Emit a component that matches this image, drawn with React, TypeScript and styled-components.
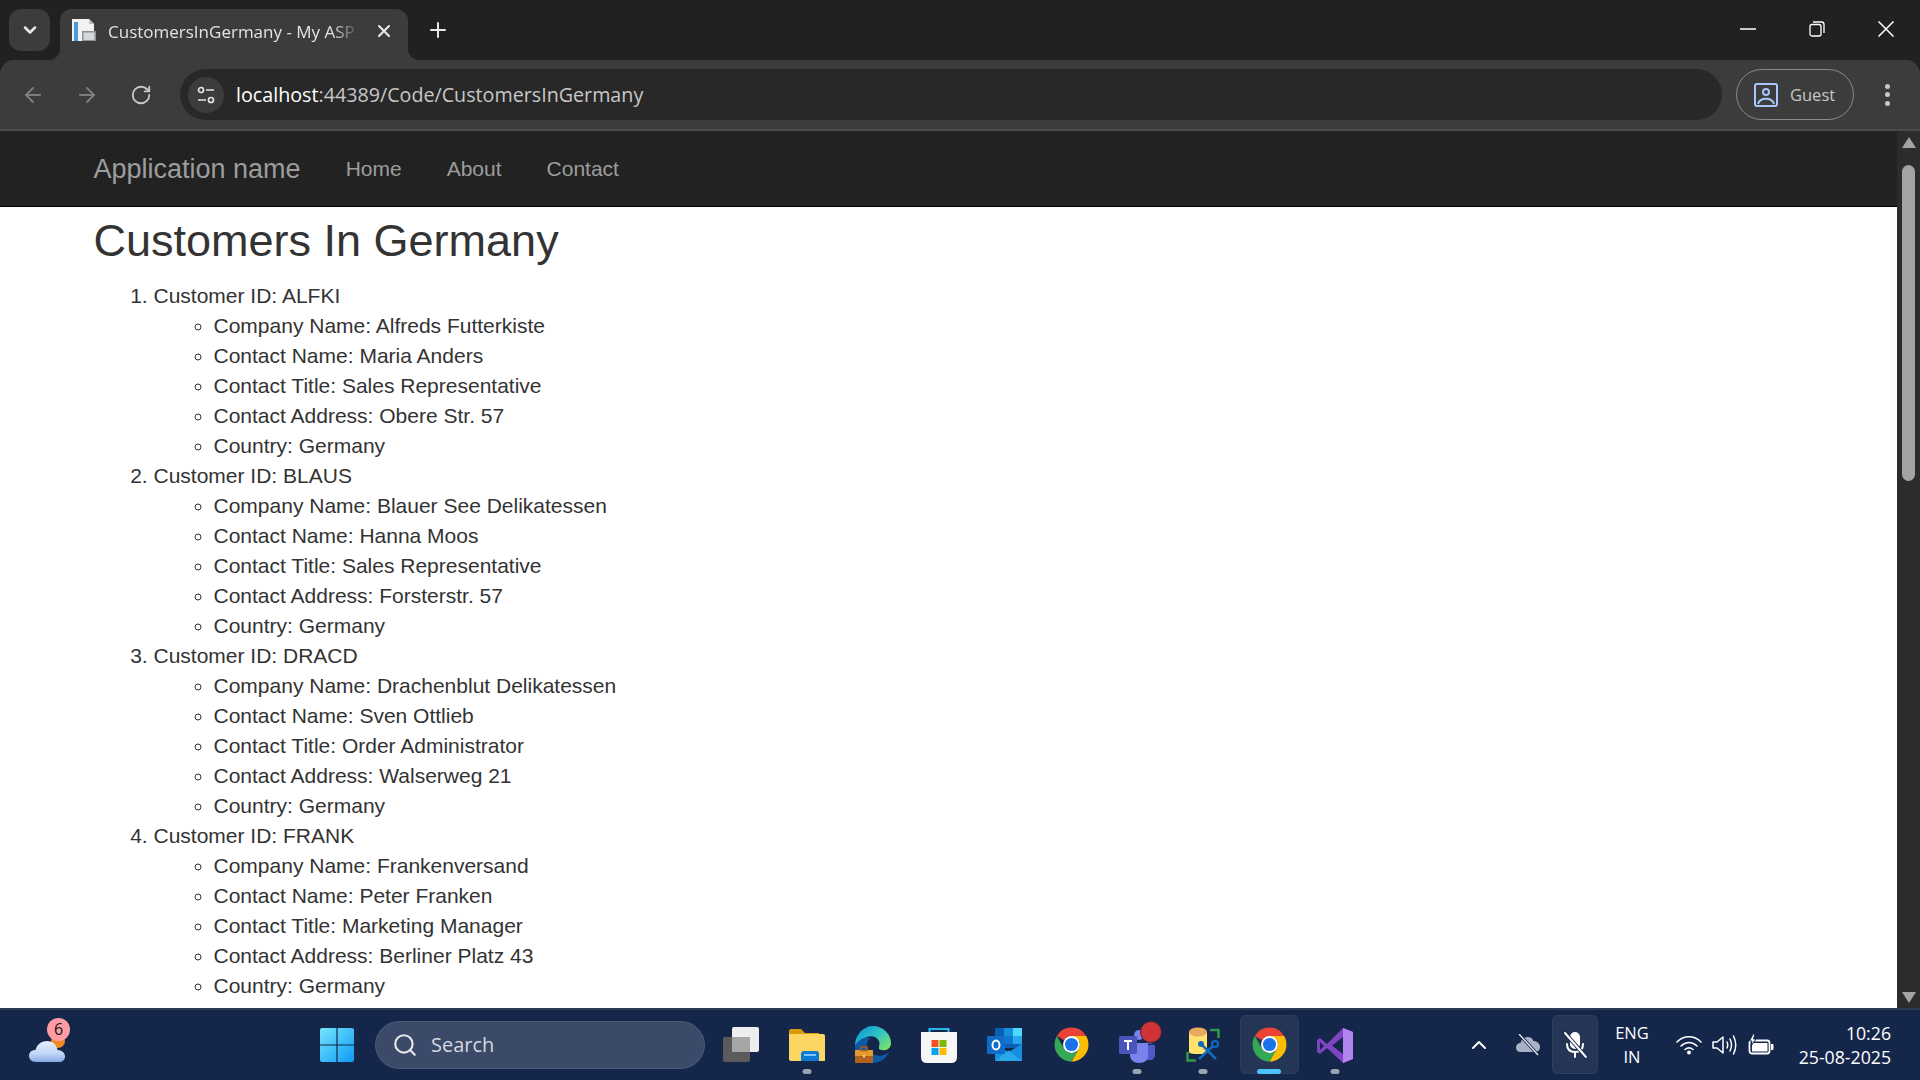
import React from 'react';
import styled, { createGlobalStyle } from 'styled-components';
import { ArrowLeft, ArrowRight, ChevronDown, ChevronUp, Plus, RotateCw, Search, X } from 'lucide-react';

const customers = [
	{ id: 'ALFKI', company: 'Alfreds Futterkiste', contact: 'Maria Anders', title: 'Sales Representative', address: 'Obere Str. 57' },
	{ id: 'BLAUS', company: 'Blauer See Delikatessen', contact: 'Hanna Moos', title: 'Sales Representative', address: 'Forsterstr. 57' },
	{ id: 'DRACD', company: 'Drachenblut Delikatessen', contact: 'Sven Ottlieb', title: 'Order Administrator', address: 'Walserweg 21' },
	{ id: 'FRANK', company: 'Frankenversand', contact: 'Peter Franken', title: 'Marketing Manager', address: 'Berliner Platz 43' },
];

const GlobalStyle = createGlobalStyle`
	html, body {
		margin: 0;
		height: 100%;
		overflow: hidden;
	}
`;

const ChromeLogo = () => (
	<svg width="37" height="37" viewBox="0 0 48 48">
		<path fill="#ea4335" d="M24 2A22 22 0 0 1 43.05 13H24A11 11 0 0 0 14.47 18.5L4.95 13A22 22 0 0 1 24 2Z" />
		<path fill="#fbbc04" d="M43.05 13A22 22 0 0 1 24 46L33.53 29.5A11 11 0 0 0 33.53 18.5L24 13H43.05Z" />
		<path fill="#34a853" d="M24 46A22 22 0 0 1 4.95 13L14.47 29.5A11 11 0 0 0 33.53 29.5Z" />
		<circle cx="24" cy="24" r="11" fill="#fff" />
		<circle cx="24" cy="24" r="8.5" fill="#1a73e8" />
	</svg>
);

const WindowsLogo = () => (
	<svg width="36" height="36" viewBox="0 0 36 36">
		<defs>
			<linearGradient id="winLogo" x1="0" y1="0" x2="1" y2="1">
				<stop offset="0" stopColor="#74e4fb" />
				<stop offset="1" stopColor="#0f9bf5" />
			</linearGradient>
		</defs>
		<path fill="url(#winLogo)" d="M1 3Q1 1 3 1H17.4V17.4H1ZM18.6 1H33Q35 1 35 3V17.4H18.6ZM1 18.6H17.4V35H3Q1 35 1 33ZM18.6 18.6H35V33Q35 35 33 35H18.6Z" />
	</svg>
);

const WeatherIcon = () => (
	<svg width="40" height="28" viewBox="0 0 40 28">
		<defs>
			<linearGradient id="cloud" x1="0" y1="0" x2="0" y2="1">
				<stop offset="0" stopColor="#e6eefc" />
				<stop offset="0.6" stopColor="#c3d6f6" />
				<stop offset="1" stopColor="#86a9e6" />
			</linearGradient>
		</defs>
		<circle cx="30" cy="6" r="7" fill="#f08a24" />
		<path fill="url(#cloud)" d="M8 27C3 27 1 23.500 1 21C1 17 4 15 7.500 15C9 9 14 6 19 6C25 6 29 10 29.500 15C34 15 37 18 37 21.500C37 25 34.500 27 31 27Z" />
	</svg>
);

const TaskViewIcon = () => (
	<svg width="38" height="36" viewBox="0 0 38 36">
		<rect x="10" y="0" width="27" height="25" rx="2" fill="#eeeeee" />
		<rect x="1" y="10" width="27" height="25" rx="2" fill="#5b5b5b" />
		<rect x="10" y="10" width="18" height="15" fill="#a6a6a6" />
	</svg>
);

const ExplorerIcon = () => (
	<svg width="36" height="36" viewBox="0 0 36 36">
		<path fill="#d99b0b" d="M0 4Q0 2 2 2H12L16 6H30V14H0Z" />
		<path fill="#fbd663" d="M0 7H34Q36 7 36 9V34H2Q0 34 0 32Z" />
		<path fill="#0b78d4" d="M12 34V27Q12 24 15 24H27Q30 24 30 27V34Z" />
		<rect x="15" y="27" width="12" height="2" fill="#79c5f5" />
	</svg>
);

const EdgeIcon = () => (
	<svg width="36" height="37" viewBox="0 0 36 37">
		<defs>
			<linearGradient id="edgeTop" x1="0" y1="0" x2="1" y2="0.8">
				<stop offset="0" stopColor="#0f8fd0" />
				<stop offset="0.55" stopColor="#2cc3c9" />
				<stop offset="1" stopColor="#7be06a" />
			</linearGradient>
		</defs>
		<path fill="url(#edgeTop)" d="M0 20C0 8 9 0 18 0C28 0 36 8 36 17C36 22 32 25 27 24C21 24 26 19 24 15C22 11 17 9 12 11C6 13 3 16 0 20Z" />
		<path fill="#0c59a4" d="M0 20C3 14 9 10 15 12C11 15 11 21 14 25C19 31 28 31 34 26C31 33 25 37 18 37C8 37 0 30 0 20Z" />
		<rect x="0" y="24" width="18" height="13" rx="1" fill="#b0621c" />
		<path fill="#e69a2e" d="M0 25Q0 24 1 24H17Q18 24 18 25V30H0Z" />
		<rect x="6" y="21" width="6" height="3.500" fill="none" stroke="#a9591c" strokeWidth="1.500" />
		<rect x="8" y="29" width="2" height="2.500" fill="#f8d77c" />
	</svg>
);

const StoreIcon = () => (
	<svg width="36" height="36" viewBox="0 0 36 36">
		<path fill="none" stroke="#27b4ee" strokeWidth="2.200" d="M8.500 6V2H27.500V6" />
		<path fill="#f6f6f6" d="M0 5H36V30Q36 36 30 36H6Q0 36 0 30Z" />
		<rect x="10.500" y="13" width="7" height="7" fill="#f25022" />
		<rect x="18.500" y="13" width="7" height="7" fill="#7fba00" />
		<rect x="10.500" y="21" width="7" height="7" fill="#00a4ef" />
		<rect x="18.500" y="21" width="7" height="7" fill="#ffb900" />
	</svg>
);

const OutlookIcon = () => (
	<svg width="36" height="36" viewBox="0 0 36 36">
		<rect x="8" y="1" width="27" height="20" rx="1.500" fill="#0a5fb4" />
		<rect x="17" y="1" width="9" height="8" fill="#1490df" />
		<rect x="26" y="1" width="9" height="8" fill="#50d9ff" />
		<rect x="17" y="9" width="9" height="8" fill="#0f78d4" />
		<rect x="26" y="9" width="9" height="8" fill="#28a8ea" />
		<path fill="#1490df" d="M8 17L21.500 25L35 17V33Q35 34 34 34H9Q8 34 8 33Z" />
		<path fill="#28a8ea" d="M8 34L21.500 23.500L35 34Z" />
		<rect x="0" y="9" width="18" height="18" rx="1.500" fill="#0f6cc8" />
		<ellipse cx="9" cy="18" rx="3.500" ry="4.500" fill="none" stroke="#fff" strokeWidth="2" />
	</svg>
);

const TeamsIcon = () => (
	<svg width="38" height="36" viewBox="0 0 38 36">
		<circle cx="21" cy="8" r="5" fill="#7b83eb" />
		<circle cx="32" cy="13" r="4" fill="#5059c9" />
		<path fill="#5059c9" d="M27 18H37V28Q37 33 32 33H27Z" />
		<path fill="#7b83eb" d="M12 16H30V29Q30 36 21 36C15 36 12 32 12 28Z" />
		<rect x="1" y="9" width="18" height="18" rx="1.500" fill="#4b53bc" />
		<path fill="none" stroke="#fff" strokeWidth="2" d="M6 14H14M10 14V23" />
	</svg>
);

const DbToolIcon = () => (
	<svg width="36" height="36" viewBox="0 0 36 36">
		<path fill="#ffe36b" d="M4 5H22V25Q22 27 13 27Q4 27 4 25Z" />
		<ellipse cx="13" cy="5" rx="9" ry="4.500" fill="#e9aa5f" />
		<path fill="none" stroke="#2e9a47" strokeWidth="2.500" d="M25 3H33.500V11M2.500 25V33.500H11" />
		<path fill="none" stroke="#0f6cbd" strokeWidth="2.500" d="M14 32L28 19M17 18L31 32" />
		<circle cx="30" cy="17" r="3" fill="none" stroke="#0f6cbd" strokeWidth="2" />
		<circle cx="16" cy="17" r="3" fill="#0f6cbd" />
	</svg>
);

const VisualStudioIcon = () => (
	<svg width="36" height="36" viewBox="0 0 36 36">
		<path fill="#7e45c2" d="M26 1L10 17L3 11L0 13V25L3 27L10 21L26 36L36 32V5ZM26 10V27L15 18.500ZM3 15L7 19L3 23Z" />
		<path fill="#b184ee" d="M26 1L36 5V32L26 36Z" />
	</svg>
);

const CloudOffIcon = () => (
	<svg width="26" height="22" viewBox="0 0 26 22">
		<path fill="#a8b2c4" d="M6 18C2 18 1 15.500 1 13.500C1 11 3 9 5.500 9C6.500 5 9.500 3 12.500 3C15.500 3 17.500 4.500 18.500 7C22 7 25 9.500 25 13C25 16 23 18 20 18Z" />
		<path stroke="#14264a" strokeWidth="3" d="M4 0L23 21" />
		<path stroke="#e8ecf3" strokeWidth="1.300" d="M4 0L23 21" />
	</svg>
);

const MicOffIcon = () => (
	<svg width="26" height="28" viewBox="0 0 26 28">
		<g fill="none" stroke="#fff" strokeWidth="2" strokeLinecap="round">
			<rect x="9" y="2" width="8" height="15" rx="4" fill="#fff" />
			<path d="M5 13C5 18 8 21 13 21C18 21 21 18 21 13M13 21V26" />
			<path stroke="#14264a" strokeWidth="4" d="M3 2L24 26" />
			<path d="M3 2L24 26" />
		</g>
	</svg>
);

const WifiIcon = () => (
	<svg width="26" height="20" viewBox="0 0 26 20">
		<g fill="none" stroke="#fff" strokeWidth="1.600" strokeLinecap="round">
			<path d="M1 7C8 0 18 0 25 7M5 11C10 6.500 16 6.500 21 11M9 14.500C11.500 12.500 14.500 12.500 17 14.500" />
		</g>
		<circle cx="13" cy="17.500" r="2" fill="#fff" />
	</svg>
);

const SpeakerIcon = () => (
	<svg width="26" height="22" viewBox="0 0 26 22">
		<g fill="none" stroke="#fff" strokeWidth="1.500" strokeLinecap="round" strokeLinejoin="round">
			<path d="M1 8V14H5L11 19V3L5 8Z" />
			<path d="M15 8C16 10 16 12 15 14M18 5C20 9 20 13 18 17M21.500 2C24.500 8 24.500 14 21.500 20" />
		</g>
	</svg>
);

const BatteryIcon = () => (
	<svg width="26" height="22" viewBox="0 0 26 22">
		<rect x="1.500" y="6.500" width="20" height="13" rx="2.500" fill="none" stroke="#fff" strokeWidth="1.800" />
		<path fill="#fff" d="M4 17.500V9H19.500V17.500ZM23 10H24.500Q25.500 10 25.500 11V15Q25.500 16 24.500 16H23Z" />
		<path fill="#fff" stroke="#14264a" strokeWidth="1" d="M5 0L1.500 7H4L3 12L8 5H5.500L7 0Z" />
	</svg>
);

const SiteInfoIcon = () => (
	<svg width="20" height="20" viewBox="0 0 20 20">
		<g fill="none" stroke="#e3e3e3" strokeWidth="1.700">
			<circle cx="5" cy="5" r="2.500" />
			<path d="M10 5H18M2 15H10" />
			<circle cx="15" cy="15" r="2.500" />
		</g>
	</svg>
);

const GuestIcon = () => (
	<svg width="24" height="24" viewBox="0 0 24 24">
		<g fill="none" stroke="#a8c7fa" strokeWidth="2">
			<rect x="1" y="1" width="22" height="22" rx="2" />
			<circle cx="12" cy="9" r="3" />
			<path d="M4 21C6 14 18 14 20 21" />
		</g>
	</svg>
);

const TabFavicon = () => (
	<svg width="24" height="24" viewBox="0 0 24 24">
		<path fill="#f2f2f2" d="M0 1H17L22 6V23H0Z" />
		<rect x="2" y="4" width="4" height="19" fill="#4a9bd8" />
		<rect x="10" y="13" width="14" height="10" fill="#8e9094" />
		<rect x="11.500" y="14.500" width="11" height="7.500" fill="#d4d7db" />
		<path fill="#b9bec6" d="M17 1L22 6H17Z" />
	</svg>
);

const App = () => (
	<>
		<GlobalStyle />
		<Shell>
			<TabStrip>
				<TabSearchButton>
					<ChevronDown size={20} strokeWidth={3} />
				</TabSearchButton>
				<ActiveTab>
					<FaviconSlot>
						<TabFavicon />
					</FaviconSlot>
					<TabTitle>CustomersInGermany - My ASP.</TabTitle>
					<X size={20} strokeWidth={2.5} color="#e8e8e8" />
				</ActiveTab>
				<NewTab>
					<Plus size={24} strokeWidth={2} />
				</NewTab>
				<WindowControls>
					<WindowButton>
						<svg width="16" height="16" viewBox="0 0 16 16">
							<path stroke="#fff" strokeWidth="1.500" d="M0 8H16" />
						</svg>
					</WindowButton>
					<WindowButton>
						<svg width="16" height="16" viewBox="0 0 16 16">
							<g fill="none" stroke="#fff" strokeWidth="1.300">
								<rect x="1" y="3.500" width="11" height="11.500" rx="2" />
								<path d="M4 1H12.500Q15 1 15 3.500V12" />
							</g>
						</svg>
					</WindowButton>
					<WindowButton>
						<svg width="16" height="16" viewBox="0 0 16 16">
							<path stroke="#fff" strokeWidth="1.500" d="M0.500 0.500L15.500 15.500M15.500 0.500L0.500 15.500" />
						</svg>
					</WindowButton>
				</WindowControls>
			</TabStrip>

			<Toolbar>
				<NavIcon $dim>
					<ArrowLeft size={24} strokeWidth={2} />
				</NavIcon>
				<NavIcon $dim>
					<ArrowRight size={24} strokeWidth={2} />
				</NavIcon>
				<NavIcon>
					<RotateCw size={22} strokeWidth={2} />
				</NavIcon>
				<Omnibox>
					<SiteInfo>
						<SiteInfoIcon />
					</SiteInfo>
					<Url>
						localhost<UrlRest>:44389/Code/CustomersInGermany</UrlRest>
					</Url>
				</Omnibox>
				<GuestPill>
					<GuestIcon />
					<span>Guest</span>
				</GuestPill>
				<MenuDots>
					<i />
					<i />
					<i />
				</MenuDots>
			</Toolbar>

			<Viewport>
				<Page>
					<Navbar>
						<Container>
							<NavbarRow>
								<Brand>Application name</Brand>
								<NavLink>Home</NavLink>
								<NavLink>About</NavLink>
								<NavLink>Contact</NavLink>
							</NavbarRow>
						</Container>
					</Navbar>
					<Container>
						<Heading>Customers In Germany</Heading>
						<CustomerList>
							{customers.map(c => (
								<li key={c.id}>
									Customer ID: {c.id}
									<DetailList>
										<li>Company Name: {c.company}</li>
										<li>Contact Name: {c.contact}</li>
										<li>Contact Title: {c.title}</li>
										<li>Contact Address: {c.address}</li>
										<li>Country: Germany</li>
									</DetailList>
								</li>
							))}
						</CustomerList>
					</Container>
				</Page>
				<Scrollbar>
					<ArrowUp />
					<Thumb />
					<ArrowDown />
				</Scrollbar>
			</Viewport>

			<Taskbar>
				<WeatherSlot>
					<WeatherWrap>
						<WeatherIcon />
						<WeatherBadge>6</WeatherBadge>
					</WeatherWrap>
				</WeatherSlot>
				<TaskSlot>
					<WindowsLogo />
				</TaskSlot>
				<SearchBox>
					<Search size={26} strokeWidth={2} color="#e4e6ea" />
					<span>Search</span>
				</SearchBox>
				<TaskSlot>
					<TaskViewIcon />
				</TaskSlot>
				<TaskSlot $running>
					<ExplorerIcon />
				</TaskSlot>
				<TaskSlot>
					<EdgeIcon />
				</TaskSlot>
				<TaskSlot>
					<StoreIcon />
				</TaskSlot>
				<TaskSlot>
					<OutlookIcon />
				</TaskSlot>
				<TaskSlot>
					<ChromeLogo />
				</TaskSlot>
				<TaskSlot $running>
					<TeamsIcon />
					<TeamsBadge />
				</TaskSlot>
				<TaskSlot $running>
					<DbToolIcon />
				</TaskSlot>
				<TaskSlot $active>
					<ChromeLogo />
				</TaskSlot>
				<TaskSlot $running>
					<VisualStudioIcon />
				</TaskSlot>

				<Tray>
					<TraySlot $width={48}>
						<ChevronUp size={24} strokeWidth={2} color="#fff" />
					</TraySlot>
					<TraySlot $width={49}>
						<CloudOffIcon />
					</TraySlot>
					<MicBox>
						<MicOffIcon />
					</MicBox>
					<LangBox>
						<span>ENG</span>
						<span>IN</span>
					</LangBox>
					<QuickGroup>
						<TraySlot $width={36}>
							<WifiIcon />
						</TraySlot>
						<TraySlot $width={36}>
							<SpeakerIcon />
						</TraySlot>
						<TraySlot $width={36}>
							<BatteryIcon />
						</TraySlot>
					</QuickGroup>
					<Clock>
						<span>10:26</span>
						<span>25-08-2025</span>
					</Clock>
				</Tray>
			</Taskbar>
		</Shell>
	</>
);

const chromeFont = `"Open Sans", "Noto Sans", sans-serif`;
const pageFont = `"Liberation Sans", Arial, sans-serif`;

const Shell = styled.div`
	height: 100vh;

	display: flex;
	flex-direction: column;

	background-color: #202222;
	overflow: hidden;
`;

const TabStrip = styled.div`
	height: 60px;
	flex: none;

	display: flex;
	align-items: flex-end;

	padding-left: 9px;

	background-color: #202222;
`;

const TabSearchButton = styled.div`
	width: 41px;
	height: 42px;

	display: flex;
	align-items: center;
	justify-content: center;

	margin-bottom: 9px;
	margin-right: 10px;

	border-radius: 12px;

	background-color: #3c3c3c;
	color: #e8e8e8;
`;

const ActiveTab = styled.div`
	position: relative;

	width: 348px;
	height: 51px;

	display: flex;
	align-items: center;

	padding: 0 14px 7px 12px;
	box-sizing: border-box;

	border-radius: 12px 12px 0 0;

	background-color: #3c3c3c;

	&::before,
	&::after {
		content: '';
		position: absolute;
		bottom: 0;
		width: 12px;
		height: 12px;
	}

	&::before {
		left: -12px;
		background: radial-gradient(circle at 0 0, transparent 12px, #3c3c3c 12.5px);
	}

	&::after {
		right: -12px;
		background: radial-gradient(circle at 100% 0, transparent 12px, #3c3c3c 12.5px);
	}
`;

const FaviconSlot = styled.div`
	display: flex;

	margin-bottom: 2px;
`;

const TabTitle = styled.div`
	flex: 1;
	min-width: 0;

	margin: 0 12px;

	white-space: nowrap;

	font-family: ${chromeFont};
	font-size: 17px;
	color: #e3e3e3;

	mask-image: linear-gradient(to right, #000 88%, transparent 99%);
`;

const NewTab = styled.div`
	width: 36px;
	height: 36px;

	display: flex;
	align-items: center;
	justify-content: center;

	margin: 0 0 12px 12px;

	color: #e8e8e8;
`;

const WindowControls = styled.div`
	display: flex;
	align-self: stretch;

	margin-left: auto;
`;

const WindowButton = styled.div`
	width: 69px;
	height: 58px;

	display: flex;
	align-items: center;
	justify-content: center;
`;

const Toolbar = styled.div`
	height: 71px;
	flex: none;

	display: flex;
	align-items: center;

	box-sizing: border-box;
	padding-left: 6px;

	border-radius: 14px 14px 0 0;
	border-bottom: 2px solid #4a4a4a;

	background-color: #3c3c3c;
`;

const NavIcon = styled.div<{ $dim?: boolean }>`
	width: 54px;
	height: 54px;
	flex: none;

	display: flex;
	align-items: center;
	justify-content: center;

	color: ${p => (p.$dim ? '#7d7d7d' : '#c7c7c7')};
`;

const Omnibox = styled.div`
	width: 1542px;
	height: 51px;

	display: flex;
	align-items: center;

	margin-left: 12px;

	border-radius: 26px;

	background-color: #282828;
`;

const SiteInfo = styled.div`
	width: 36px;
	height: 36px;

	display: flex;
	align-items: center;
	justify-content: center;

	margin: 0 12px 0 8px;

	border-radius: 50%;

	background-color: #3c3c3c;
`;

const Url = styled.div`
	font-family: ${chromeFont};
	font-size: 19.7px;
	color: #ffffff;
`;

const UrlRest = styled.span`
	color: #c7c7c7;
`;

const GuestPill = styled.div`
	width: 118px;
	height: 51px;

	display: flex;
	align-items: center;

	gap: 12px;

	box-sizing: border-box;
	margin-left: 14px;
	padding-left: 17px;

	border-radius: 26px;
	border: 1.5px solid #8a8a8a;

	font-family: ${chromeFont};
	font-size: 16.5px;
	color: #c7c7c7;
`;

const MenuDots = styled.div`
	display: flex;
	flex-direction: column;

	gap: 3.5px;

	margin-left: 31px;

	i {
		display: block;
		width: 5px;
		height: 5px;
		border-radius: 50%;
		background-color: #c7c7c7;
	}
`;

const Viewport = styled.div`
	flex: 1;
	min-height: 0;

	display: flex;
`;

const Page = styled.div`
	flex: 1;
	min-width: 0;

	background-color: #fff;
	overflow: hidden;

	font-family: ${pageFont};
	font-size: 21px;
	line-height: 30px;
	color: #333;
`;

const Navbar = styled.nav`
	height: 76px;

	box-sizing: border-box;
	border-bottom: 1px solid #000;

	background-color: #222;
`;

const Container = styled.div`
	width: 1755px;

	box-sizing: border-box;
	margin: 0 auto;
	padding: 0 22.5px;
`;

const NavbarRow = styled.div`
	height: 75px;

	display: flex;
	align-items: center;
`;

const Brand = styled.a`
	margin-right: 22.5px;

	font-size: 27px;
	color: #9d9d9d;
`;

const NavLink = styled.a`
	padding: 0 22.5px;

	color: #9d9d9d;
`;

const Heading = styled.h2`
	margin: 8.5px 0 16px;

	font-size: 45px;
	font-weight: 500;
	line-height: 49.5px;
	color: #333;
`;

const CustomerList = styled.ol`
	margin: 0;
	padding-left: 60px;
`;

const DetailList = styled.ul`
	margin: 0;
	padding-left: 60px;
	list-style-type: circle;
`;

const Scrollbar = styled.div`
	width: 23px;
	flex: none;

	display: flex;
	flex-direction: column;
	align-items: center;

	box-sizing: border-box;
	padding: 6px 0 5px;

	background-color: #2c2c2c;
`;

const ArrowUp = styled.div`
	width: 0;
	height: 0;

	border-left: 7px solid transparent;
	border-right: 7px solid transparent;
	border-bottom: 11px solid #a3a3a3;
`;

const ArrowDown = styled.div`
	width: 0;
	height: 0;

	margin-top: auto;

	border-left: 7px solid transparent;
	border-right: 7px solid transparent;
	border-top: 11px solid #a3a3a3;
`;

const Thumb = styled.div`
	width: 13px;
	height: 316px;

	margin-top: 17px;

	border-radius: 7px;

	background-color: #a3a3a3;
`;

const Taskbar = styled.div`
	height: 72px;
	flex: none;

	display: flex;
	align-items: center;

	box-sizing: border-box;
	padding-bottom: 1px;

	border-top: 2px solid #2c3b58;

	background-color: #14264a;
	font-family: ${chromeFont};
	color: #fff;
`;

const WeatherSlot = styled.div`
	width: 304px;
	flex: none;

	display: flex;

	padding-left: 28px;
	box-sizing: border-box;
`;

const WeatherWrap = styled.div`
	position: relative;

	display: flex;

	padding-top: 8px;
`;

const WeatherBadge = styled.div`
	position: absolute;
	top: -9px;
	left: 19px;

	width: 23px;
	height: 23px;

	display: flex;
	align-items: center;
	justify-content: center;

	border-radius: 50%;

	background-color: #ff9ca4;

	font-size: 16px;
	color: #111;
`;

const TaskSlot = styled.div<{ $running?: boolean; $active?: boolean }>`
	position: relative;

	width: 66px;
	height: 59px;
	flex: none;

	display: flex;
	align-items: center;
	justify-content: center;

	&::before {
		content: '';
		display: ${p => (p.$active ? 'block' : 'none')};
		position: absolute;
		top: 0;
		bottom: 0;
		left: 3.5px;
		right: 3.5px;
		border-radius: 6px;
		background-color: rgba(255, 255, 255, 0.07);
		border: 1px solid rgba(255, 255, 255, 0.04);
	}

	&::after {
		content: '';
		display: ${p => (p.$running || p.$active ? 'block' : 'none')};
		position: absolute;
		left: 50%;
		bottom: 0;
		transform: translateX(-50%);
		width: ${p => (p.$active ? '24px' : '9px')};
		height: 5px;
		border-radius: 3px;
		background-color: ${p => (p.$active ? '#4cc2ff' : '#9aa3b2')};
	}

	svg {
		position: relative;
	}
`;

const TeamsBadge = styled.div`
	position: absolute;
	top: 6px;
	right: 8px;

	width: 22px;
	height: 22px;

	box-sizing: border-box;
	border-radius: 50%;
	border: 1px solid #4a2230;

	background-color: #d13438;
`;

const SearchBox = styled.div`
	width: 330px;
	height: 48px;
	flex: none;

	display: flex;
	align-items: center;

	gap: 13px;

	box-sizing: border-box;
	margin: 0 3px 0 5px;
	padding-left: 16px;

	border-radius: 24px;
	border: 1px solid #4a5a78;

	background-color: #3a4a68;

	font-size: 20px;
	color: #d6d9df;
`;

const Tray = styled.div`
	display: flex;
	align-items: center;

	margin-left: auto;
	padding-right: 29px;
`;

const TraySlot = styled.div<{ $width: number }>`
	width: ${p => p.$width}px;

	display: flex;
	align-items: center;
	justify-content: center;
`;

const MicBox = styled.div`
	width: 46px;
	height: 59px;

	display: flex;
	align-items: center;
	justify-content: center;

	border-radius: 6px;
	border: 1px solid rgba(255, 255, 255, 0.05);
	box-sizing: border-box;

	background-color: rgba(255, 255, 255, 0.07);
`;

const LangBox = styled.div`
	width: 68px;

	display: flex;
	flex-direction: column;
	align-items: center;

	font-size: 16.5px;
	line-height: 24px;
`;

const QuickGroup = styled.div`
	display: flex;
	align-items: center;

	margin-left: 5px;
`;

const Clock = styled.div`
	width: 112px;

	display: flex;
	flex-direction: column;
	align-items: flex-end;

	font-size: 17.7px;
	line-height: 24px;
`;

export default App;
